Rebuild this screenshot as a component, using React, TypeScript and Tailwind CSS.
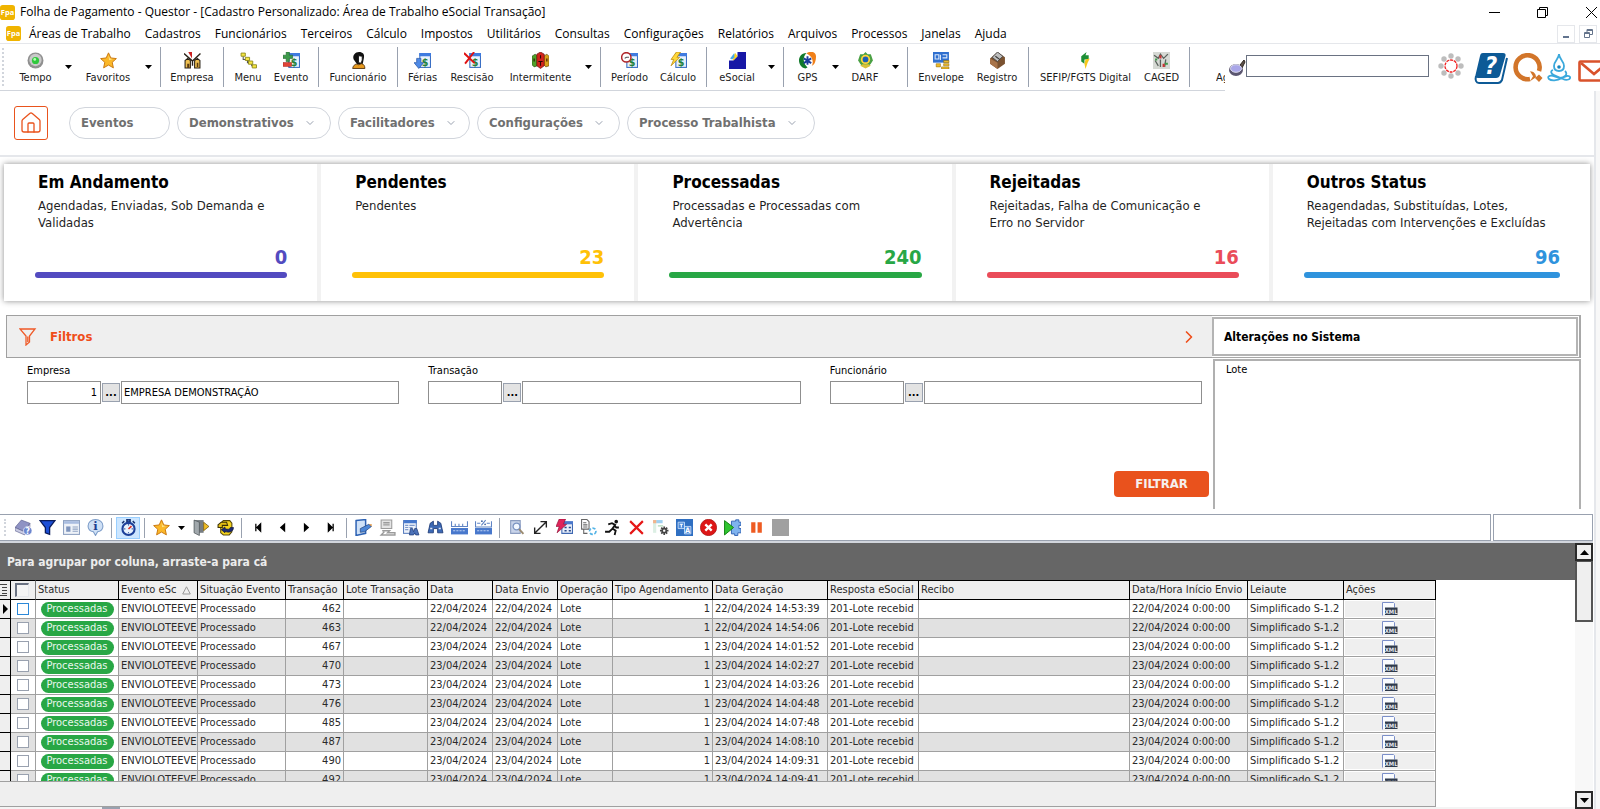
import React from "react";
import { ChevronDown, ChevronRight, House } from "lucide-react";
import clsx from "clsx";

// ---------- small drawing helpers ----------
const Svg = ({ children, className = "h-4 w-4" }: { children: React.ReactNode; className?: string }) => (
  <svg viewBox="0 0 16 16" className={className} fill="none" aria-hidden="true">
    {children}
  </svg>
);

const Caret = () => (
  <svg viewBox="0 0 7 4" className="h-1 w-[7px]" aria-hidden="true">
    <path d="M0 0h7L3.5 4z" fill="#000" />
  </svg>
);

const Star = () => (
  <Svg className="h-[17px] w-[17px]">
    <path d="M8 .8l2.2 4.8 5.2.6-3.9 3.5 1.1 5.2L8 12.3l-4.6 2.6 1.1-5.2L.6 6.2l5.2-.6z" fill="#fbb829" stroke="#c8760c" strokeWidth=".9" />
    <path d="M8 3l1.2 3.2 2.8.5-3.4 1z" fill="#ffe48a" />
  </Svg>
);

const MoneySheet = () => (
  <>
    <rect x="5.5" y="1.5" width="10" height="13" fill="#e9f1fb" stroke="#3a6fc4" />
    <path d="M5 1h11v3H5z" fill="#3f7be0" />
    <text x="10.5" y="13" textAnchor="middle" fontSize="10" fontWeight="bold" fill="#23803a">$</text>
  </>
);

const FpaLogo = () => (
  <svg viewBox="0 0 16 16" className="h-[15px] w-[15px] shrink-0" aria-hidden="true">
    <rect width="16" height="16" rx="3" fill="#f0b400" />
    <text x="8" y="11" textAnchor="middle" fontSize="8" fontWeight="bold" fill="#fff">Fpa</text>
  </svg>
);

// ---------- main toolbar ----------
const toolIcons: Record<string, React.ReactNode> = {
  tempo: (
    <>
      <circle cx="8" cy="8" r="7.5" fill="#8f8f8f" />
      <circle cx="8" cy="7.5" r="5.8" fill="#c9c9c9" />
      <circle cx="8" cy="8" r="3.4" fill="#2fc83c" />
      <circle cx="7.3" cy="7" r="1.3" fill="#b6ffb4" />
    </>
  ),
  empresa: (
    <>
      <path d="M1 15V8l2.5-2L6 8v7zM10 15V8l2.5-2L15 8v7z" fill="#f0c050" stroke="#2a2218" />
      <path d="M0 1.5l8 7 7.5-7M8 8v5" stroke="#2a2218" strokeWidth="1.3" />
      <path d="M4 0h3.5v6z" fill="#c22" />
      <path d="M3 11h2v4H3zM12 10h1.5v4H12z" fill="#5b3c12" />
    </>
  ),
  menu: (
    <>
      <path d="M3 4v3h4v3h4v3h2" stroke="#555" />
      <path d="M1 1h4v3H1zM5 5h4v3H5zM8 8.5h4v3H8zM11.5 12h4v3h-4z" fill="#f5e642" stroke="#8a8416" strokeWidth=".8" />
    </>
  ),
  evento: (
    <>
      <MoneySheet />
      <path d="M3 0h3v3h3v3H6v3H3V6H0V3h3z" fill="#3e9a4b" stroke="#256b31" strokeWidth=".6" />
      <rect y="10" width="8" height="3.5" fill="#e04436" stroke="#9d2018" strokeWidth=".5" />
    </>
  ),
  funcionario: (
    <>
      <path d="M3.5 7C2 3 5 0 8.5 0 12 0 14 2 13 6l-1 5-5 1z" fill="#111" />
      <path d="M8 3.5l3.5.5v3.5l-1 3L8 10z" fill="#fff" stroke="#111" strokeWidth=".8" />
      <path d="M2.5 15.5C3 12 6 10.5 8 12l3-1c2 .5 3 2 3 4.5z" fill="#e79a1f" stroke="#4d2c05" strokeWidth=".8" />
    </>
  ),
  ferias: (
    <>
      <MoneySheet />
      <path d="M2.5 6h4v4H9l-4.5 5.5L0 10h2.5z" fill="#4e8ae6" stroke="#2a5aa8" strokeWidth=".7" />
    </>
  ),
  rescisao: (
    <>
      <MoneySheet />
      <path d="M0 1l10 9.5M9.5 0L1 11" stroke="#e01212" strokeWidth="1.8" />
    </>
  ),
  intermitente: (
    <>
      <path d="M0 4l3-2 2 2v9l-3 1-2-2z" fill="#4fa12a" stroke="#27470f" strokeWidth=".6" />
      <path d="M11 4l3-2 2 2v9l-3 1-2-2z" fill="#d9a11c" stroke="#5f4508" strokeWidth=".6" />
      <path d="M4.5 2L8 0l3.5 2v11L8 15.5 4.5 13z" fill="#d3241c" stroke="#5e0d08" strokeWidth=".6" />
      <path d="M8 3v3M6 9h4M8 9v4M2 6v3M14 6v3" stroke="#2c0503" />
    </>
  ),
  periodo: (
    <>
      <MoneySheet />
      <circle cx="5" cy="5" r="4.4" fill="#fff" stroke="#b0262a" strokeWidth="1.4" />
      <path d="M5 5h2.5M5 5L3.5 6" stroke="#555" />
    </>
  ),
  calculo: (
    <>
      <MoneySheet />
      <path d="M6 0h4L6.5 5H9L1 13l2.5-6H1z" fill="#ffd83a" stroke="#b8870b" strokeWidth=".7" />
    </>
  ),
  esocial: (
    <>
      <path d="M0 8h4l4-4V0h8v16H0z" fill="#1717a6" />
      <path d="M3 5l3-4 2 3-4 4z" fill="#ffd21f" />
      <path d="M1 6l4-5v4l-2 2z" fill="#45a9e8" />
    </>
  ),
  gps: (
    <>
      <path d="M7 1C2 1 0 5 0 8s2 7 6 7.5l2-1C4 11 3 5 7 1z" fill="#117a2b" />
      <path d="M7 1.5c3-3 9-2 9 2.5 0 4-1 8-4 9 2-3 1-9-5-11.5z" fill="#f0801a" />
      <path d="M8 4v8M4.500 6l7 4.500M11.500 6l-7 4.500" stroke="#1b3d9c" strokeWidth="1.8" />
    </>
  ),
  darf: (
    <>
      <path d="M8 0l2 2 3 0 1 3 1 3-2 3-2 2.5H5L3 11 1 8l1-3 1-3h3z" fill="#4aa044" />
      <circle cx="8" cy="7" r="4.4" fill="#ffd43a" />
      <circle cx="8" cy="7" r="2.7" fill="#1c5fb5" />
      <path d="M3 13l5 2.5 5-2.5-2-1.5H5z" fill="#d9c13b" />
    </>
  ),
  envelope: (
    <>
      <rect width="15" height="10" fill="#2f6fcf" />
      <path d="M2 2.5h3.500v4H2zM7 2.500v5M9 2.500h4v3H9" stroke="#dce9fb" />
      <path d="M10 8h5v2h-5zM10 11h5v2h-5zM8 14h7v2H8zM3 11h4v3H3z" fill="#eebc2c" stroke="#8d6a0a" strokeWidth=".5" />
    </>
  ),
  registro: (
    <>
      <path d="M1 6l7-6 7 5v6l-7 5-7-5z" fill="#7a5230" />
      <path d="M1 6l7 4v6l-7-5z" fill="#a8744a" />
      <path d="M3 5l5-5 5 4-5 5z" fill="#bdbdbd" stroke="#444" strokeWidth=".8" />
      <path d="M6 4l4 3" stroke="#333" />
    </>
  ),
  sefip: (
    <>
      <path d="M9 0L4 4v5l3 2V7h4V3H8z" fill="#1d8f35" />
      <path d="M8 7l4-1-2 4-2 6-1-5z" fill="#f6c71c" />
    </>
  ),
  caged: (
    <>
      <rect width="16" height="16" fill="#d6d9d4" />
      <path d="M1 3l4 3 2-4 3 4 4-4M2 8l3 5M7 7v7M12 7l-1 7" stroke="#59615b" strokeWidth="1.2" />
      <path d="M2 6h2v2H2zM11 10h3v2h-3z" fill="#3e9a4b" />
      <path d="M6 3h2v3H6zM9 11h2v3H9z" fill="#c33" />
    </>
  ),
};

type Tool = { label: string; icon: string; width: string; caret?: boolean };

const toolGroups: Tool[][] = [
  [
    { label: "Tempo", icon: "tempo", width: "w-[49px]", caret: true },
    { label: "Favoritos", icon: "favoritos", width: "w-16", caret: true },
  ],
  [{ label: "Empresa", icon: "empresa", width: "w-[54px]" }],
  [
    { label: "Menu", icon: "menu", width: "w-10" },
    { label: "Evento", icon: "evento", width: "w-[46px]" },
  ],
  [{ label: "Funcionário", icon: "funcionario", width: "w-[70px]" }],
  [
    { label: "Férias", icon: "ferias", width: "w-[41px]" },
    { label: "Rescisão", icon: "rescisao", width: "w-[58px]" },
    { label: "Intermitente", icon: "intermitente", width: "w-[79px]", caret: true },
  ],
  [
    { label: "Período", icon: "periodo", width: "w-[49px]" },
    { label: "Cálculo", icon: "calculo", width: "w-12" },
  ],
  [{ label: "eSocial", icon: "esocial", width: "w-[52px]", caret: true }],
  [
    { label: "GPS", icon: "gps", width: "w-[39px]", caret: true },
    { label: "DARF", icon: "darf", width: "w-11", caret: true },
  ],
  [
    { label: "Envelope", icon: "envelope", width: "w-[58px]" },
    { label: "Registro", icon: "registro", width: "w-[54px]" },
  ],
  [
    { label: "SEFIP/FGTS Digital", icon: "sefip", width: "w-[105px]" },
    { label: "CAGED", icon: "caged", width: "w-[47px]" },
  ],
];

const menus = [
  "Áreas de Trabalho", "Cadastros", "Funcionários", "Terceiros", "Cálculo", "Impostos", "Utilitários",
  "Consultas", "Configurações", "Relatórios", "Arquivos", "Processos", "Janelas", "Ajuda",
];

const Grip = () => (
  <div className="my-1 w-0 self-stretch border-l-2 border-dotted border-gray-300" />
);

function TitleBar() {
  return (
    <header className="bg-white font-['Open_Sans',sans-serif] text-xs text-black">
      <div className="flex h-6 items-center">
        <FpaLogo />
        <h1 className="ml-[5px] flex-1">
          Folha de Pagamento - Questor - [Cadastro Personalizado: Área de Trabalho eSocial Transação]
        </h1>
        <button aria-label="Minimizar" className="flex w-12 justify-center">
          <svg viewBox="0 0 11 11" className="h-[11px] w-[11px]"><path d="M0 5.5h11" stroke="#000" /></svg>
        </button>
        <button aria-label="Restaurar" className="flex w-12 justify-center">
          <svg viewBox="0 0 11 11" className="h-[11px] w-[11px]" fill="none">
            <path d="M.5 2.5h8v8h-8zM2.500 2V.5h8v8H9" stroke="#000" />
          </svg>
        </button>
        <button aria-label="Fechar" className="flex w-[34px] justify-end pr-[3px]">
          <svg viewBox="0 0 11 11" className="h-[11px] w-[11px]"><path d="M0 0l11 11M11 0L0 11" stroke="#000" /></svg>
        </button>
      </div>
      <nav className="flex h-5 items-center border-b border-gray-200 pl-[6px]">
        <FpaLogo />
        <div className="ml-2 flex flex-1 gap-[14px]">
          {menus.map((m) => (
            <button key={m}>{m}</button>
          ))}
        </div>
        <button aria-label="Minimizar janela" className="mr-1 flex h-[18px] w-[18px] items-end justify-center border border-gray-200 pb-1">
          <span className="h-[2px] w-[6px] bg-slate-500" />
        </button>
        <button aria-label="Restaurar janela" className="mr-[3px] flex h-[18px] w-[18px] items-center justify-center border border-gray-200">
          <svg viewBox="0 0 9 9" className="h-[9px] w-[9px]" fill="none">
            <path d="M.5 3.5h5v5h-5zM.5 4.500h5M3 3V.5h5.500v5H6M3 1.500h5" stroke="#64748b" />
          </svg>
        </button>
      </nav>
    </header>
  );
}

function MainToolbar() {
  return (
    <div className="flex h-[47px] bg-white text-[11px] text-[#1c1c1c]">
      <div className="flex border-b border-gray-300 pl-[2px]">
        <Grip />
        <div className="w-[7px]" />
        {toolGroups.map((group, i) => (
          <div key={i} className="flex">
            {group.map((t) => (
              <React.Fragment key={t.label}>
                <button className={clsx("flex flex-col items-center gap-px pt-2 whitespace-nowrap", t.width)}>
                  {t.icon === "favoritos" ? <Star /> : <Svg className="h-[17px] w-[17px]">{toolIcons[t.icon]}</Svg>}
                  <span className="leading-4">{t.label}</span>
                </button>
                {t.caret && (
                  <button aria-label={`Mais opções: ${t.label}`} className="flex w-4 items-center justify-center">
                    <Caret />
                  </button>
                )}
              </React.Fragment>
            ))}
            <div className="mx-1 my-[3px] w-px bg-gray-400" />
          </div>
        ))}
        <button className="ml-[22px] w-[9px] overflow-hidden pt-[23px] text-left">Ag</button>
      </div>
      <div className="flex flex-1 items-center pl-[3px]">
        <svg viewBox="0 0 18 18" className="h-[18px] w-[18px] shrink-0" aria-hidden="true">
          <path d="M12 6l4-5 1 2-3 6z" fill="#5d5048" stroke="#2d2622" />
          <ellipse cx="8" cy="11" rx="7" ry="6" fill="#5b5670" />
          <ellipse cx="8" cy="9.5" rx="5.5" ry="3.8" fill="#a9a6e8" stroke="#dcdcf0" />
        </svg>
        <input aria-label="Pesquisar" className="mb-1 h-[22px] min-w-0 flex-1 border border-gray-500 bg-white px-1" />
        <svg viewBox="0 0 26 26" className="mb-1 ml-[9px] h-[26px] w-[26px] shrink-0" aria-hidden="true">
          <g fill="#bdbdbd">
            <circle cx="13" cy="3" r="2.7" /><circle cx="20" cy="6" r="2.7" /><circle cx="23" cy="13" r="2.7" />
            <circle cx="20" cy="20" r="2.7" /><circle cx="13" cy="23" r="2.7" /><circle cx="6" cy="20" r="2.7" />
            <circle cx="3" cy="13" r="2.7" /><circle cx="6" cy="6" r="2.7" />
          </g>
          <circle cx="13" cy="13" r="6" fill="#fff" stroke="#f02020" strokeWidth="1.3" strokeDasharray="3 .8" />
        </svg>
        <button aria-label="Ajuda" className="ml-[10px]">
          <svg viewBox="0 0 34 32" className="h-8 w-[34px]" fill="none">
            <path d="M9 1h20c2 0 3 1 2.5 3L26 23c-.5 2-2 3-4 3H4c-2 0-3-1-2.5-3L6 4c.5-2 1-3 3-3z" fill="#0d5a96" />
            <path d="M2 24c-1 4 0 7 3 7h19c2 0 3-1 4-3l5-22" stroke="#0d5a96" strokeWidth="2" />
            <text x="17" y="22" textAnchor="middle" fontSize="24" fontWeight="bold" fontStyle="italic" fill="#fff">?</text>
          </svg>
        </button>
        <button aria-label="Questor" className="ml-[5px]">
          <svg viewBox="0 0 30 30" className="h-[30px] w-[30px]" fill="none">
            <path d="M17 26A12 12 0 1 1 26 18" stroke="#d2752a" strokeWidth="4.6" />
            <path d="M17 28.3l3-5-3-5c4 0 6 3 6 6z" fill="#d2752a" />
            <path d="M26 21.5l3.5 3.5-3.5 4-4-4z" fill="#d2752a" />
          </svg>
        </button>
        <button aria-label="Zen" className="ml-[3px]">
          <svg viewBox="0 0 26 30" className="h-[30px] w-[26px]" fill="none" stroke="#3ba9dc" strokeWidth="1.8">
            <path d="M13 1c0 5-5 7-5 12 0 3 2 5 5 5s5-2 5-5c0-5-5-7-5-12z" />
            <circle cx="13" cy="14" r="1.8" fill="#1584bd" stroke="none" />
            <path d="M7 17c-3 1-2 4 1 5l9 4c4 2 8 0 7-2s-5-1-8 1c-5 3-11 3-13 1s0-4 4-3l7 2c3 0 9-3 5-7" />
          </svg>
        </button>
        <button aria-label="Mensagens" className="-mr-[10px] ml-[6px] pt-[6px]">
          <svg viewBox="0 0 32 22" className="h-[22px] w-8" fill="none" stroke="#d9522b" strokeWidth="2.6">
            <rect x="1.5" y="1.5" width="29" height="19" rx="1" />
            <path d="M3 3l13 11L29 3" />
          </svg>
        </button>
      </div>
    </div>
  );
}

// ---------- work area ----------
const tabs = [
  { label: "Eventos", width: "w-[101px]" },
  { label: "Demonstrativos", width: "w-[154px]", menu: true },
  { label: "Facilitadores", width: "w-[132px]", menu: true },
  { label: "Configurações", width: "w-[143px]", menu: true },
  { label: "Processo Trabalhista", width: "w-[188px]", menu: true },
];

const cards = [
  { title: "Em Andamento", text: "Agendadas, Enviadas, Sob Demanda e Validadas", value: 0, color: "text-[#534bc0]", bar: "bg-[#534bc0]" },
  { title: "Pendentes", text: "Pendentes", value: 23, color: "text-[#ffc107]", bar: "bg-[#ffc107]" },
  { title: "Processadas", text: "Processadas e Processadas com Advertência", value: 240, color: "text-[#28a745]", bar: "bg-[#28a745]" },
  { title: "Rejeitadas", text: "Rejeitadas, Falha de Comunicação e\nErro no Servidor", value: 16, color: "text-[#ea4c59]", bar: "bg-[#ea4c59]" },
  { title: "Outros Status", text: "Reagendadas, Substituídas, Lotes, Rejeitadas com Intervenções e Excluídas", value: 96, color: "text-[#2f93dd]", bar: "bg-[#2f93dd]" },
];

function WorkTabs() {
  return (
    <nav className="flex h-[66px] items-center gap-[7px] border-b-2 border-gray-200 pl-[14px]">
      <a href="#inicio" aria-label="Início" className="mr-[14px] flex h-[34px] w-[34px] items-center justify-center rounded-[3px] border border-[#e9531d] text-[#e9531d]">
        <House className="h-6 w-6" strokeWidth={1.3} />
      </a>
      {tabs.map((t) => (
        <button
          key={t.label}
          className={clsx("flex h-8 items-center gap-[10px] rounded-full border border-gray-300 pl-[11px] text-[13px] font-bold whitespace-nowrap text-[#707070]", t.width)}
        >
          {t.label}
          {t.menu && <ChevronDown className="h-3 w-3 text-gray-400" />}
        </button>
      ))}
    </nav>
  );
}

function StatusCards() {
  return (
    <section className="mt-[7px] mr-1 ml-1 grid grid-cols-5 divide-x-4 divide-[#f2f2f2] bg-white shadow-[0_0_6px_rgba(0,0,0,0.45)]">
      {cards.map((c) => (
        <article key={c.title} className="flex h-[137px] flex-col pt-[6px] pr-[30px] pl-[31px]">
          <h2 className="pl-[3px] text-[17px] leading-6 font-bold text-black">{c.title}</h2>
          <p className="mt-[3px] h-[34px] pl-[3px] text-[13px] leading-[17px] whitespace-pre-line text-[#1f1f1f]">{c.text}</p>
          <div className={clsx("mt-[14px] text-right text-xl leading-6 font-bold", c.color)}>{c.value}</div>
          <div className={clsx("mt-[3px] h-[6px] rounded-full", c.bar)} />
        </article>
      ))}
    </section>
  );
}

const fields = [
  { id: "empresa", label: "Empresa", code: "1", name: "EMPRESA DEMONSTRAÇÃO" },
  { id: "transacao", label: "Transação", code: "", name: "" },
  { id: "funcionario", label: "Funcionário", code: "", name: "" },
];

function Filters() {
  return (
    <section className="mr-[13px] ml-[6px] mt-[14px] flex h-[194px] text-[11px] text-black">
      <div className="flex min-w-0 flex-1 flex-col">
        <div className="flex h-[43px] items-center border border-r-0 border-[#a0a0a0] bg-[#efefef] pr-[13px] pl-3">
          <svg viewBox="0 0 18 18" className="h-[18px] w-[18px]" fill="none" stroke="#ef5a28" strokeWidth="1.3" aria-hidden="true">
            <path d="M1 1h15l-5.500 7v6l-3.500 3V8zM8.800 8.500V14" />
          </svg>
          <h2 className="ml-[13px] flex-1 text-[13px] font-bold text-[#ef4e1a]">Filtros</h2>
          <ChevronRight className="h-5 w-5 text-[#ef4e1a]" />
        </div>
        <div className="grid grid-cols-3 gap-[29px] pt-[5px] pr-[10px] pl-[21px]">
          {fields.map((f) => (
            <div key={f.id}>
              <label htmlFor={f.id} className="block leading-4">{f.label}</label>
              <div className="mt-[2px] flex items-center gap-[1px]">
                <input id={f.id} defaultValue={f.code} className="h-[23px] w-[74px] border border-[#8f8f8f] bg-white px-[3px] text-right" />
                <button aria-label={`Buscar ${f.label}`} className="h-[19px] w-[18px] border border-gray-400 bg-[#e3e3e3] leading-none font-bold">
                  ...
                </button>
                <input aria-label={`Nome ${f.label}`} defaultValue={f.name} className="h-[23px] min-w-0 flex-1 border border-[#8f8f8f] bg-white px-[2px]" />
              </div>
            </div>
          ))}
        </div>
        <button className="mt-auto mr-[3px] mb-3 h-[26px] w-[95px] self-end rounded bg-[#e9521d] text-[13px] font-bold text-[#f6f0ee]">
          FILTRAR
        </button>
      </div>
      <aside className="flex w-[369px] flex-col">
        <div className="border-y border-r-2 border-[#a8a8a8] bg-white p-px pl-0">
          <h2 className="flex h-[39px] items-center border-2 border-[#b4b4b4] pl-[10px] text-[12px] font-bold">Alterações no Sistema</h2>
        </div>
        <div className="mt-px ml-px flex-1 border-2 border-b-0 border-[#b0b0b0] pt-px pl-[11px] leading-4">Lote</div>
      </aside>
    </section>
  );
}

// ---------- grid toolbar ----------
const Sheet = () => (
  <>
    <rect x=".5" y="1.5" width="12" height="12" fill="#eef3fb" stroke="#5c7fbf" />
    <path d="M1 1h12v3H1z" fill="#4477cc" />
    <path d="M2 6h3M2 8h3M2 10h3M6 6h5M6 8h3" stroke="#7f9acb" />
  </>
);

const gridIcons: Record<string, React.ReactNode> = {
  Livro: (
    <>
      <path d="M0 8l6-7 8 3-5 8z" fill="#8f93c4" stroke="#5e628f" strokeWidth=".6" />
      <path d="M0 8l9 4 5-8v3l-5 8-9-4z" fill="#c9cbe3" stroke="#5e628f" strokeWidth=".6" />
      <circle cx="12" cy="11" r="4" fill="#6c86cf" stroke="#fff" strokeWidth=".6" />
      <text x="12" y="14" textAnchor="middle" fontSize="8" fontWeight="bold" fill="#fff">?</text>
    </>
  ),
  Filtro: <path d="M1 1.5h14L10 8v6.5l-4-1.5V8z" fill="#1c4fd6" stroke="#0a1c5c" strokeWidth="1.2" />,
  Formulário: (
    <>
      <rect x=".5" y="1.5" width="15" height="13" fill="#eef2f8" stroke="#8fa2c2" />
      <path d="M1 2h14v2.5H1z" fill="#a9bde0" />
      <path d="M3 7h4v5H3z" fill="#7e94bd" />
      <path d="M9 7.500h5M9 9.500h5M9 11.500h5" stroke="#8fa2c2" />
    </>
  ),
  Informação: (
    <>
      <path d="M8 .5C12 .5 15 3 15 6.500c0 3-2 5-5 5.500l-2 3.500L6 12c-3-.5-5-2.500-5-5.500C1 3 4 .5 8 .5z" fill="#cfe0f5" stroke="#7c9cc8" />
      <text x="8" y="10.5" textAnchor="middle" fontSize="11" fontWeight="bold" fontFamily="DejaVu Serif, serif" fill="#1d3f8f">i</text>
    </>
  ),
  Cronômetro: (
    <>
      <path d="M6.500 0h3v3h-3zM12 2l2 2M2 4l2-2" stroke="#17306e" fill="#3662b8" strokeWidth="1.4" />
      <circle cx="8" cy="9.3" r="5.7" fill="#e8f3fd" stroke="#1c419a" strokeWidth="2" />
      <path d="M8 5v1M12 9.300h-1M8 13.500v-1M4 9.300h1" stroke="#1c419a" />
      <path d="M8 9.500l2.800-2.800" stroke="#e02b20" strokeWidth="1.4" />
    </>
  ),
  Sair: (
    <>
      <path d="M1 1h9v12H1z" fill="#777d82" />
      <path d="M1 1l5 2v12.500L1 13z" fill="#a1a8ac" stroke="#50565a" strokeWidth=".7" />
      <path d="M10 3l5 4-5 4z" fill="#f1bd23" stroke="#6d5408" strokeWidth=".7" />
    </>
  ),
  Atualizar: (
    <>
      <path d="M3.500 4L6 1.500h6L14 4v8l-2.500 3H6L3.500 13z" fill="#f3d21c" stroke="#57480a" />
      <path d="M1 8V5.500L4 3h5l1 3H5v2z" fill="#e5bf12" stroke="#3d3208" />
      <path d="M15.500 8c0 5-6 5-8 3.500V13L4 10l3.500-2.500V9c2 1 5 1 5-1z" fill="#1c2a72" stroke="#0b1238" strokeWidth=".6" />
    </>
  ),
  Primeiro: <path d="M5.500 4.500v7M10 4.500v7L6.500 8z" fill="#000" stroke="#000" strokeWidth="1.2" />,
  Anterior: <path d="M10.500 3.500v9L5.500 8z" fill="#000" />,
  Próximo: <path d="M5.500 3.500v9l5-4.500z" fill="#000" />,
  Último: <path d="M10.500 4.500v7M6 4.500v7L9.500 8z" fill="#000" stroke="#000" strokeWidth="1.2" />,
  Editar: (
    <>
      <path d="M1 1.500l9-1v13l-9 2z" fill="#cfe1f7" stroke="#2c61b3" strokeWidth="1.4" />
      <path d="M5 9l8-4 2.500 2L9 12l-4 .5z" fill="#4c86d6" stroke="#2a4a80" strokeWidth=".7" />
      <path d="M13 5l2.500 2 .3-2z" fill="#df8d32" />
    </>
  ),
  Gravar: (
    <>
      <path d="M2 1h10v8H2z" fill="#e4e4e4" stroke="#9b9b9b" />
      <path d="M4 3.500h6M4 5.500h6M3 11h7l-2 2h7v2H2l3-3" stroke="#9b9b9b" strokeWidth="1.3" />
    </>
  ),
  Localizar: (
    <>
      <Sheet />
      <path d="M6 15l1-6h2l1 3 1-3h2l2 6h-3l-1-2-1 2z" fill="#4d72b8" stroke="#1f3c78" strokeWidth=".7" />
    </>
  ),
  Binóculo: (
    <>
      <path d="M1 13l2-9 3-2v4h4V2l3 2 2 9h-5v-4H6v4z" fill="#3c69b5" stroke="#1d3a75" strokeWidth=".8" />
      <path d="M3 9h2M11 9h2" stroke="#dfe9f8" strokeWidth="1.5" />
    </>
  ),
  Régua: (
    <>
      <path d="M.5 2v5M4 4.500V7M7.500 4.500V7M11 4.500V7M15.500 2v5M0 7h16" stroke="#5f84c4" />
      <path d="M0 8.500h16v6H0z" fill="#4878cc" />
      <path d="M2 11h12" stroke="#bcd0f2" strokeDasharray="2 1" />
    </>
  ),
  "Régua percentual": (
    <>
      <path d="M.5 2v5M15.500 2v5M0 7.500h16M2 4h3M11 4h3M6 6l4-5" stroke="#5f84c4" />
      <circle cx="6.5" cy="2" r=".8" fill="#35599c" /><circle cx="9.5" cy="5" r=".8" fill="#35599c" />
      <path d="M0 8.500h16v6H0z" fill="#4878cc" />
      <path d="M2 11h12" stroke="#bcd0f2" strokeDasharray="2 1" />
    </>
  ),
  Visualizar: (
    <>
      <path d="M2.500 1.500h9v12h-9z" fill="#c9d4ea" stroke="#8b9cc0" />
      <circle cx="8" cy="7" r="3.2" fill="#f2f7ff" stroke="#7b93c2" strokeWidth="1.2" />
      <path d="M10.500 9.500L14.500 14" stroke="#9a8a70" strokeWidth="1.8" />
    </>
  ),
  Expandir: <path d="M2.500 13.500l11-11M8 2.500h5.500V8M2.500 8v5.500H8" stroke="#222" strokeWidth="1.3" />,
  "Executar formulário": (
    <>
      <path d="M5.500 3.500h10v10h-10z" fill="#e8effa" stroke="#3f68b2" />
      <path d="M5 2h11v3H5z" fill="#4a77cb" />
      <path d="M8 8h2M8 11h2M12 8h2M12 11h2" stroke="#27488a" strokeWidth="1.4" />
      <path d="M3 0h6L7 5h3L1 13l2-6H0z" fill="#e0245a" stroke="#8d0e35" strokeWidth=".6" />
    </>
  ),
  Exportar: (
    <>
      <path d="M1.500.5h5l2 2v7h-7zM3 3.500h3M3 5.500h4M3 7.500h4M3.500 10v3.500H7" stroke="#666" />
      <circle cx="12" cy="11.5" r="3" stroke="#54b4e6" strokeWidth="1.6" strokeDasharray="3 1.5" />
    </>
  ),
  Executar: (
    <>
      <circle cx="11.5" cy="2.5" r="1.7" fill="#111" />
      <path d="M4 5l3.500-1 3 1.500L8 9l3 2-1 4M8 9l-3 3H1M9.500 6l2 2H14" stroke="#111" strokeWidth="1.7" />
    </>
  ),
  Excluir: <path d="M2 2l12 12M14 2L2 14" stroke="#e61717" strokeWidth="2" />,
  Configurar: (
    <>
      <path d="M1 1h9v3H1z" fill="#9fd0f0" />
      <path d="M1 1h3v12H1z" fill="#dcefe4" />
      <path d="M1 1h3v3H1z" fill="#f2b48c" />
      <path d="M5.500 6.500h5" stroke="#9fd0a8" />
      <path d="M11.500 7v8M7.500 11h8M8.700 8.200l5.600 5.600M14.300 8.200l-5.600 5.600" stroke="#444" strokeWidth="1.6" />
      <circle cx="11.5" cy="11" r="2.6" fill="#444" />
      <circle cx="11.5" cy="11" r="1.1" fill="#fff" />
    </>
  ),
  Traduzir: (
    <>
      <rect width="16" height="16" fill="#2f6fc2" />
      <path d="M2 3h6v6H2zM8 7h6v7H8z" fill="#4b8ada" stroke="#cfe2f8" strokeWidth=".8" />
      <path d="M3.500 5h3M5 5v3" stroke="#fff" />
      <text x="11" y="13" textAnchor="middle" fontSize="7" fontWeight="bold" fill="#fff">A</text>
    </>
  ),
  Cancelar: (
    <>
      <circle cx="8" cy="8" r="7.7" fill="#dd1616" stroke="#9f0d0d" strokeWidth=".6" />
      <path d="M5 5l6 6M11 5l-6 6" stroke="#fff" strokeWidth="2.2" />
    </>
  ),
  Processar: (
    <>
      <path d="M7 2h4V.8h3V3h2v3h-2v3h2v4h-3v2.500h-3V14H7z" fill="#7fb3ee" stroke="#3264b4" strokeWidth=".9" />
      <path d="M.5 1.500L9 8 .5 15z" fill="#2fc42f" stroke="#128212" strokeWidth=".9" />
    </>
  ),
  Pausar: <path d="M3 3h4v10H3zM9 3h4v10H9z" fill="#ee5b22" />,
  Parar: <rect width="16" height="16" fill="#a0a0a0" />,
};

const gridGroups = [
  ["Livro", "Filtro", "Formulário", "Informação"],
  ["Cronômetro"],
  ["Favoritos", "Sair", "Atualizar"],
  ["Primeiro", "Anterior", "Próximo", "Último"],
  ["Editar", "Gravar", "Localizar", "Binóculo", "Régua", "Régua percentual"],
  ["Visualizar", "Expandir", "Executar formulário", "Exportar", "Executar", "Excluir", "Configurar", "Traduzir", "Cancelar", "Processar", "Pausar", "Parar"],
];

function GridToolbar() {
  return (
    <div className="mr-px flex h-[29px] shrink-0 gap-[2px] border-b-2 border-gray-300">
      <div className="flex flex-1 border border-gray-400 border-l-0 pl-1">
        <Grip />
        <div className="w-[5px]" />
        {gridGroups.map((group, i) => (
          <div key={i} className="flex items-center">
            {i > 0 && <div className="mx-1 h-5 w-px bg-gray-400" />}
            {group.map((name) => (
              <React.Fragment key={name}>
                <button
                  aria-label={name}
                  className={clsx("flex h-[22px] w-6 items-center justify-center", name === "Cronômetro" && "border border-[#99cfff] bg-[#cce6ff]")}
                >
                  {name === "Favoritos" ? <Star /> : <Svg className="h-[17px] w-[17px]">{gridIcons[name]}</Svg>}
                </button>
                {name === "Favoritos" && (
                  <button aria-label="Mais favoritos" className="flex w-4 justify-center">
                    <Caret />
                  </button>
                )}
              </React.Fragment>
            ))}
          </div>
        ))}
      </div>
      <div className="w-[100px] border border-gray-400" />
    </div>
  );
}

// ---------- data grid ----------
const columns = [
  { label: "Status", width: "w-[83px]" },
  { label: "Evento eSc", width: "w-[79px]", sorted: true },
  { label: "Situação Evento", width: "w-[88px]" },
  { label: "Transação", width: "w-[58px]" },
  { label: "Lote Transação", width: "w-[84px]" },
  { label: "Data", width: "w-[65px]" },
  { label: "Data Envio", width: "w-[65px]" },
  { label: "Operação", width: "w-[55px]" },
  { label: "Tipo Agendamento", width: "w-[100px]" },
  { label: "Data Geração", width: "w-[115px]" },
  { label: "Resposta eSocial", width: "w-[91px]" },
  { label: "Recibo", width: "w-[211px]" },
  { label: "Data/Hora Início Envio", width: "w-[118px]" },
  { label: "Leiaute", width: "w-[96px]" },
  { label: "Ações", width: "w-[92px]" },
];

const rows = [
  { id: 462, date: "22/04/2024", time: "14:53:39" },
  { id: 463, date: "22/04/2024", time: "14:54:06" },
  { id: 467, date: "23/04/2024", time: "14:01:52" },
  { id: 470, date: "23/04/2024", time: "14:02:27" },
  { id: 473, date: "23/04/2024", time: "14:03:26" },
  { id: 476, date: "23/04/2024", time: "14:04:48" },
  { id: 485, date: "23/04/2024", time: "14:07:48" },
  { id: 487, date: "23/04/2024", time: "14:08:10" },
  { id: 490, date: "23/04/2024", time: "14:09:31" },
  { id: 492, date: "23/04/2024", time: "14:09:41" },
];

const Cell = ({ children, right }: { children?: React.ReactNode; right?: boolean }) => (
  <td className={clsx("overflow-hidden border-r border-b border-[#a0a0a0] px-[2px] py-0", right && "text-right")}>{children}</td>
);

function DataGrid() {
  return (
    <table className="w-[1436px] table-fixed border-separate border-spacing-0 text-[11px] leading-[18px] whitespace-nowrap text-[#2a2a2a]">
      <colgroup>
        <col className="w-[11px]" />
        <col className="w-[25px]" />
        {columns.map((c) => (
          <col key={c.label} className={c.width} />
        ))}
      </colgroup>
      <thead>
        <tr className="h-5 bg-[#efefef] text-left">
          <th scope="col" aria-label="Indicador" className="border-y border-r border-black p-0">
            <svg viewBox="0 0 8 12" className="h-3 w-2"><path d="M0 .5h7M2 3.500h5M2 6.500h5M2 9.500h5M0 11.500h7" stroke="#444" /></svg>
          </th>
          <th scope="col" className="border-y border-r border-[#777] border-y-black p-0">
            <input type="checkbox" aria-label="Selecionar todos" className="ml-1 block h-[14px] w-[14px] appearance-none border border-t-2 border-l-2 border-gray-200 border-t-gray-500 border-l-gray-500 bg-[#f4f4f4]" />
          </th>
          {columns.map((c) => (
            <th key={c.label} scope="col" className="overflow-hidden border-y border-r border-black py-0 pl-[2px] font-normal">
              {c.sorted ? (
                <div className="flex items-center justify-between pr-[6px]">
                  {c.label}
                  <svg viewBox="0 0 9 9" className="h-[9px] w-[9px] shrink-0" fill="none"><path d="M4.500.8L8.300 8H.7z" stroke="#999" /></svg>
                </div>
              ) : (
                c.label
              )}
            </th>
          ))}
        </tr>
      </thead>
      <tbody>
        {rows.map((r, i) => (
          <tr key={r.id} className={clsx("h-[19px]", i % 2 ? "bg-[#e1e1e1]" : "bg-white")}>
            <td className="border-r border-b border-black bg-[#efefef] p-0">
              {i === 0 && <svg viewBox="0 0 5 10" className="ml-[3px] block h-[10px] w-[5px]"><path d="M0 0l5 5-5 5z" fill="#000" /></svg>}
            </td>
            <td className="border-r border-b border-[#a0a0a0] p-0">
              <input
                type="checkbox"
                aria-label={`Selecionar transação ${r.id}`}
                className={clsx("ml-[6px] block h-3 w-3 appearance-none border bg-white", i === 0 ? "border-[#2b88d8]" : "border-gray-400")}
              />
            </td>
            <td className="border-r border-b border-[#a0a0a0] bg-white p-0">
              <span className="mx-auto block h-[15px] w-[73px] rounded-full bg-[#28a745] text-center leading-[14px] text-[#eaf7ed]">Processadas</span>
            </td>
            <Cell>ENVIOLOTEEVE</Cell>
            <Cell>Processado</Cell>
            <Cell right>{r.id}</Cell>
            <Cell />
            <Cell>{r.date}</Cell>
            <Cell>{r.date}</Cell>
            <Cell>Lote</Cell>
            <Cell right>1</Cell>
            <Cell>{r.date} {r.time}</Cell>
            <Cell>201-Lote recebid</Cell>
            <Cell />
            <Cell>{r.date} 0:00:00</Cell>
            <Cell>Simplificado S-1.2</Cell>
            <td className="border-r border-b border-[#a0a0a0] bg-white p-[1px]">
              <button aria-label={`Ver XML da transação ${r.id}`} className="flex h-4 w-full items-center justify-center bg-[#efefef]">
                <svg viewBox="0 0 16 14" className="h-[14px] w-4" fill="none">
                  <path d="M.5 13.500V.5H11.500l1 1v4" fill="#fafcff" stroke="#7b8fc9" />
                  <rect x="3" y="5.5" width="12.5" height="7.5" fill="#2f3a4c" />
                  <text x="9.2" y="11.5" textAnchor="middle" fontSize="6" fontWeight="bold" fill="#e3e8ef">XML</text>
                </svg>
              </button>
            </td>
          </tr>
        ))}
      </tbody>
    </table>
  );
}

function ScrollBar() {
  return (
    <div className="mr-px flex w-[18px] shrink-0 flex-col bg-[#f8f8f8]">
      <button aria-label="Rolar para cima" className="flex h-[18px] w-full items-center justify-center border-2 border-[#2a2a2a] bg-[#efefef]">
        <svg viewBox="0 0 9 5" className="h-[5px] w-[9px]"><path d="M0 5h9L4.500 0z" fill="#000" /></svg>
      </button>
      <div className="h-[61px] border-2 border-t border-[#555] bg-[#efefef]" />
      <div className="flex-1" />
      <button aria-label="Rolar para baixo" className="flex h-[18px] w-full items-center justify-center border-2 border-[#2a2a2a] bg-[#efefef]">
        <svg viewBox="0 0 9 5" className="h-[5px] w-[9px]"><path d="M0 0h9L4.500 5z" fill="#000" /></svg>
      </button>
    </div>
  );
}

export default function App() {
  return (
    <div className="flex h-screen flex-col overflow-hidden bg-white font-['DejaVu_Sans_Condensed','DejaVu_Sans',sans-serif]">
      <TitleBar />
      <MainToolbar />
      <div className="flex min-h-0 flex-1">
        <main className="flex min-w-0 flex-1 flex-col">
          <WorkTabs />
          <StatusCards />
          <Filters />
          <div className="h-[5px] shrink-0" />
          <GridToolbar />
          <div className="flex min-h-0 flex-1">
            <div className="flex min-w-0 flex-1 flex-col">
              <div className="flex h-[37px] shrink-0 items-center bg-[#666] pl-[7px] text-[12px] font-bold text-[#ececec]">
                Para agrupar por coluna, arraste-a para cá
              </div>
              <div className="min-h-0 flex-1 overflow-hidden">
                <DataGrid />
              </div>
              <div className="h-[26px] w-[1436px] shrink-0 border-y border-r border-[#a0a0a0] bg-[#efefef]" />
              <div className="flex h-[2px] shrink-0 bg-[#f4f4f4] pl-[102px]">
                <div className="w-[18px] bg-gray-400" />
              </div>
            </div>
            <ScrollBar />
          </div>
        </main>
        <div className="w-[6px] border-l-2 border-gray-200 bg-[#f8f8f8]" />
      </div>
    </div>
  );
}
